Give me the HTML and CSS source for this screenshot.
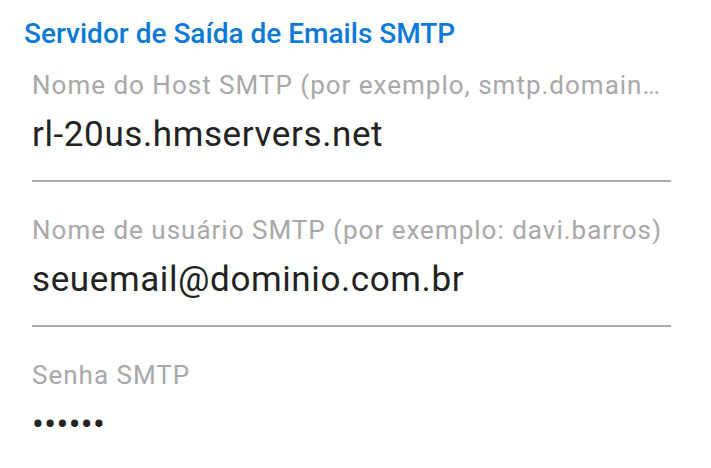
FILE: index.html
```html
<!DOCTYPE html>
<html lang="pt-BR">
<head>
  <meta charset="UTF-8" />
  <meta name="viewport" content="width=device-width, initial-scale=1.0" />
  <title>Servidor de Saída de Emails SMTP</title>
  <link rel="stylesheet" href="styles.css">
</head>
<body>
  <div class="screen">
    <h2 class="section-title">Servidor de Saída de Emails SMTP</h2>

    <div class="field">
      <label class="hint" for="smtpHost">Nome do Host SMTP (por exemplo, smtp.domain…</label>
      <div class="value" id="smtpHost">rl-20us.hmservers.net</div>
    </div>

    <div class="field">
      <label class="hint" for="smtpUser">Nome de usuário SMTP (por exemplo: davi.barros)</label>
      <div class="value" id="smtpUser">seuemail@dominio.com.br</div>
    </div>

    <div class="field">
      <label class="hint" for="smtpPass">Senha SMTP</label>
      <div class="value password" id="smtpPass">••••••</div>
    </div>
  </div>
</body>
</html>
```

FILE: styles.css
```css
body {
  margin: 0;
  background: #fff;
  font-family: Roboto, "Noto Sans", Arial, sans-serif;
}
.screen {
  padding-top: 18px;
  height: 468px;
  overflow: hidden;
  box-sizing: border-box;
}
.section-title {
  margin: 0 0 21px 24px;
  font-size: 28px;
  font-weight: 500;
  line-height: 32px;
  color: #0a79d8;
}
.field {
  margin-left: 32px;
  width: 639px;
  margin-bottom: 34px;
}
.hint {
  display: block;
  font-size: 26px;
  line-height: 28px;
  letter-spacing: 1px;
  color: #a8a8a8;
  white-space: nowrap;
  overflow: hidden;
}
.value {
  margin-top: 16px;
  padding-bottom: 25px;
  font-size: 35px;
  line-height: 40px;
  letter-spacing: 0.6px;
  color: #222;
  border-bottom: 2px solid #ababab;
}
.password {
  letter-spacing: 0.4px;
}
```
